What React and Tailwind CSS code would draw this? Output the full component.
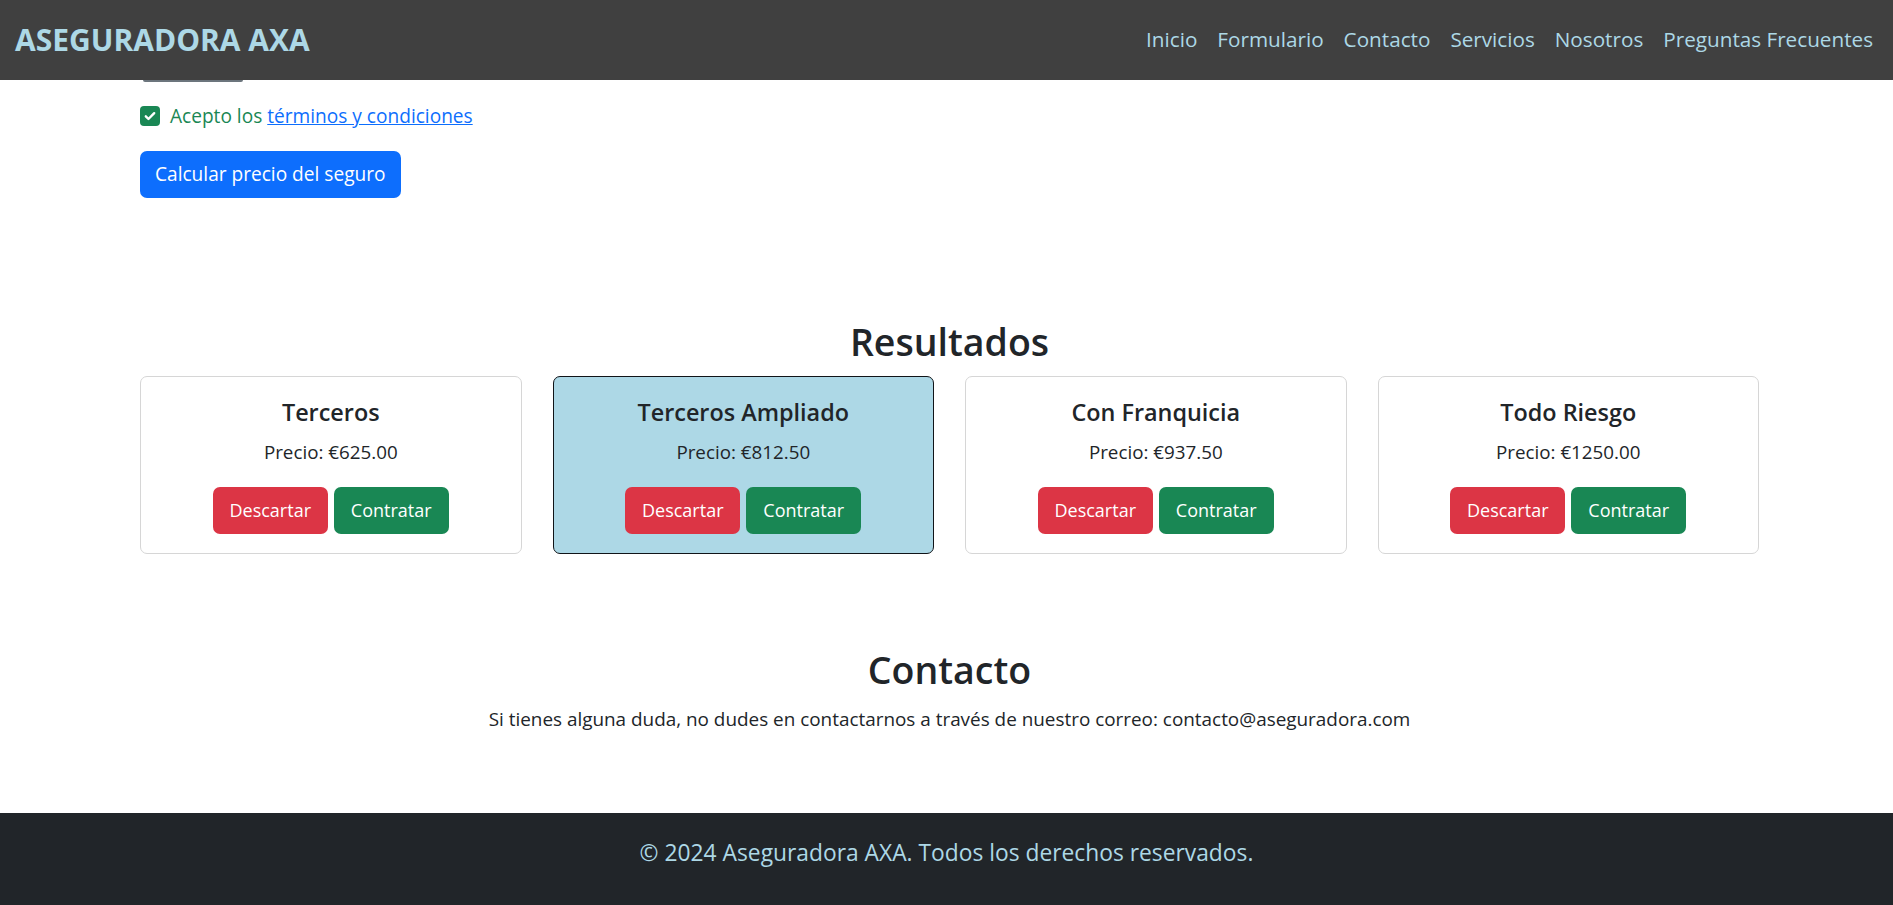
import React from "react";

const links = ["Inicio", "Formulario", "Contacto", "Servicios", "Nosotros", "Preguntas Frecuentes"];
const plans = [
  { name: "Terceros", price: "€625.00", active: false },
  { name: "Terceros Ampliado", price: "€812.50", active: true },
  { name: "Con Franquicia", price: "€937.50", active: false },
  { name: "Todo Riesgo", price: "€1250.00", active: false },
];

export default function App() {
  return (
    <div className="min-h-screen flex flex-col bg-white text-[#212529] font-['Open_Sans',sans-serif]">
      <header className="h-[80px] bg-[#404040] flex items-center justify-between pl-[15px] pr-[10px]">
        <div className="text-[30px] font-bold text-[#add8e6] leading-none">ASEGURADORA AXA</div>
        <nav className="flex items-center pb-[3px]">
          {links.map((l) => (
            <a key={l} className="px-[10px] text-[20.7px] text-[#add8e6] leading-[30px] cursor-pointer">
              {l}
            </a>
          ))}
        </nav>
      </header>

      <main className="flex-1">
        <div className="ml-[140px] w-[1619px]">
          <div className="ml-[3px] w-[100px] h-[2px] bg-[#6c757d] rounded-b-[3px]" />
          <div className="mt-[19px] flex items-center h-[30px] gap-[10px]">
            <span className="w-[20px] h-[20px] rounded-[4px] bg-[#198754] flex items-center justify-center">
              <svg width="14" height="14" viewBox="0 0 20 20" fill="none">
                <path d="M4 10.5l3.8 3.8L16 6" stroke="#fff" strokeWidth="3.4" strokeLinecap="round" strokeLinejoin="round" />
              </svg>
            </span>
            <span className="text-[19.1px] text-[#198754]">
              Acepto los <a className="text-[#0d6efd] underline cursor-pointer">términos y condiciones</a>
            </span>
          </div>
          <button className="mt-[20px] h-[47px] px-[15px] rounded-[7px] bg-[#0d6efd] text-white text-[19.1px]">
            Calcular precio del seguro
          </button>

          <h2 className="mt-[120px] mb-[10px] text-center text-[37.5px] leading-[48px] font-semibold">Resultados</h2>
          <div className="grid grid-cols-4 gap-[31px]">
            {plans.map((p) => (
              <div
                key={p.name}
                className={
                  p.active
                    ? "h-[178px] rounded-[7px] border border-[#111418] bg-[#add8e6] p-[20px] flex flex-col items-center"
                    : "h-[178px] rounded-[7px] border border-[#d6d6d6] bg-white p-[20px] flex flex-col items-center"
                }
              >
                <h5 className="text-[23.4px] leading-[30px] font-semibold mb-[10px]">{p.name}</h5>
                <p className="text-[18.8px] leading-[30px] mb-[20px]">Precio: {p.price}</p>
                <div className="flex gap-[6px]">
                  <button className="w-[115px] h-[47px] rounded-[7px] bg-[#dc3545] text-white text-[18px]">Descartar</button>
                  <button className="w-[115px] h-[47px] rounded-[7px] bg-[#198754] text-white text-[18px]">Contratar</button>
                </div>
              </div>
            ))}
          </div>

          <h2 className="mt-[92px] mb-[10px] text-center text-[37.5px] leading-[48px] font-semibold">Contacto</h2>
          <p className="text-center text-[18.9px] leading-[30px]">
            Si tienes alguna duda, no dudes en contactarnos a través de nuestro correo: contacto@aseguradora.com
          </p>
        </div>
      </main>

      <footer className="mt-[79px] h-[92px] bg-[#212529] flex justify-center pt-[22px]">
        <p className="text-[22.8px] leading-[36px] text-[#add8e6]">© 2024 Aseguradora AXA. Todos los derechos reservados.</p>
      </footer>
    </div>
  );
}
